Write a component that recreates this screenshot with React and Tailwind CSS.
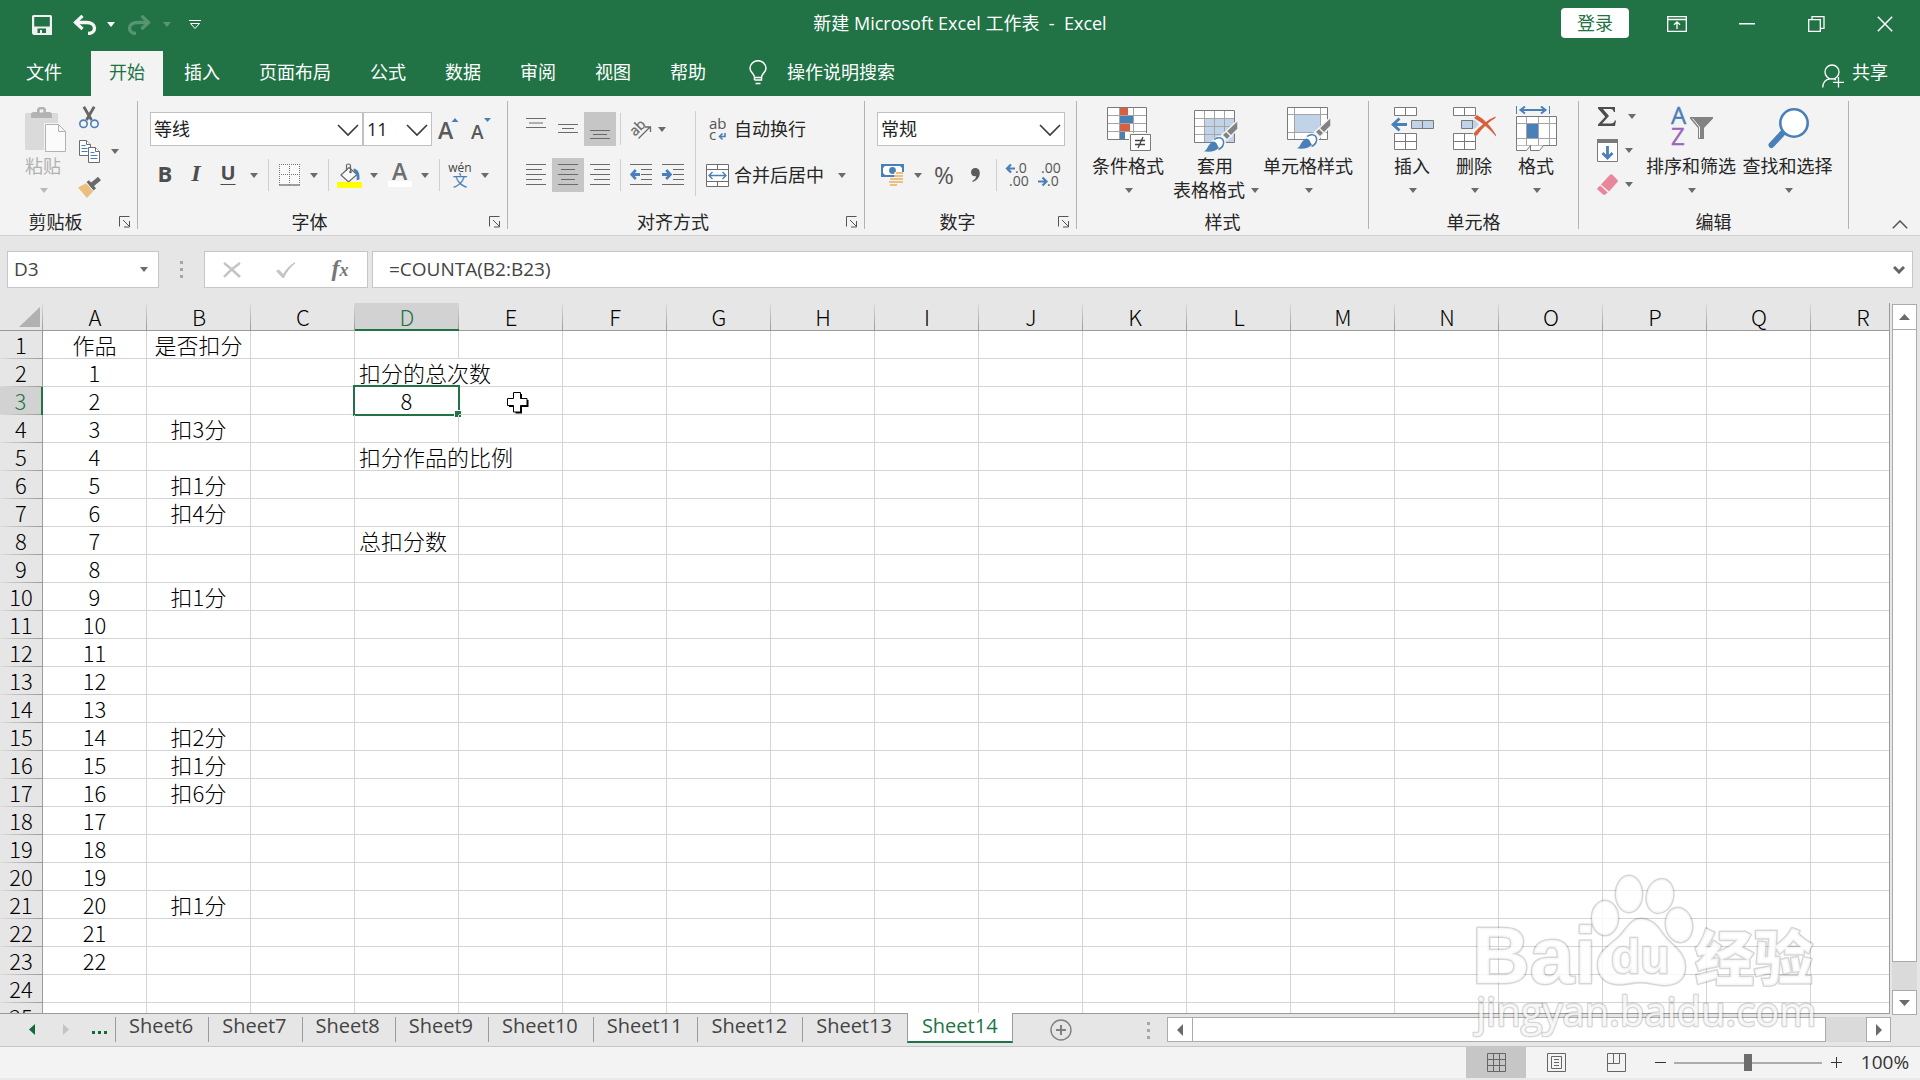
import React from "react";

const BLUE = "#4a80b8";
const GRAY = "#6d6d6d";

/* ---------- small building blocks ---------- */

function Caret({ className = "fill-[#6b6b6b]" }) {
  return (
    <svg width="8" height="5" viewBox="0 0 8 5" className={className} aria-hidden="true">
      <path d="M0 0h8L4 5z" />
    </svg>
  );
}

function Drop({ label, className = "w-5" }) {
  return (
    <button type="button" aria-label={label} className={`flex h-full shrink-0 items-center justify-center ${className}`}>
      <Caret />
    </button>
  );
}

function Tool({ label, className = "w-8", active = false, children }) {
  return (
    <button
      type="button"
      aria-label={label}
      className={`flex h-full shrink-0 items-center justify-center ${active ? "bg-[#c6c6c6]" : ""} ${className}`}
    >
      {children}
    </button>
  );
}

function Sep({ className = "w-2" }) {
  return (
    <span className={`flex h-full shrink-0 items-center justify-center ${className}`}>
      <span className="h-8 w-px bg-[#cfcfcf]" />
    </span>
  );
}

function Picker({ label, value, options, className }) {
  return (
    <label className={`relative block h-[34px] ${className}`}>
      <select
        aria-label={label}
        defaultValue={value}
        className="h-full w-full appearance-none border border-[#c1c1c1] bg-white pl-[3px] text-[18px] text-[#222]"
      >
        {options.map((o) => (
          <option key={o}>{o}</option>
        ))}
      </select>
      <svg width="22" height="13" viewBox="0 0 22 13" className="pointer-events-none absolute top-2.5 right-1 mt-0.5" aria-hidden="true">
        <path d="M1 1l10 10L21 1" fill="none" stroke="#3a3a3a" strokeWidth="1.6" />
      </svg>
    </label>
  );
}

function Group({ title, className = "", launcher = false, children }) {
  return (
    <section className={`flex shrink-0 flex-col border-r border-[#b4b4b4] ${className}`}>
      <div className="flex flex-1">{children}</div>
      <div className="flex h-3.5 items-center">
        <h2 className="flex-1 text-center leading-[14px]">{title}</h2>
        {launcher && (
          <button type="button" aria-label={`${title} 选项`} className="flex w-[26px] items-center pl-2">
            <svg width="12" height="12" viewBox="0 0 12 12" fill="none" stroke="#555" aria-hidden="true">
              <path d="M.5 10.500V.5h10M4 4l6 6M10.500 5v6H5" />
            </svg>
          </button>
        )}
      </div>
    </section>
  );
}

function Big({ icon, line1, line2, className }) {
  return (
    <button type="button" className={`flex shrink-0 flex-col items-center whitespace-nowrap ${className}`}>
      <span className="flex h-[54px] items-start pt-[5px] pl-0.5">{icon}</span>
      <span className="h-[23px] leading-[23px]">{line1}</span>
      <span className="flex h-6 items-center gap-1.5 pl-0.5 leading-6">
        {line2 && <span>{line2}</span>}
        <Caret />
      </span>
    </button>
  );
}

/* ---------- icons ---------- */

const SaveIcon = () => (
  <svg width="20" height="20" viewBox="0 0 20 20" aria-hidden="true">
    <path fill="#f0f0f0" fillRule="evenodd" d="M0 1.500Q0 0 1.500 0H18.500Q20 0 20 1.500V20H1.500L0 18.500zM2.200 2v9.500h15.600V2zM5.500 13.500V18H8v-3h2v3h4v-4.500z" />
  </svg>
);

const UndoIcon = ({ flip = false }) => (
  <svg width="24" height="20" viewBox="0 0 24 20" className={flip ? "-scale-x-100 opacity-25" : ""} fill="none" stroke="#f5f5f5" aria-hidden="true">
    <path strokeWidth="3.400" d="M2 7.500h11.500c5 0 8 2.500 8 5.800 0 3-2.500 5.200-6.500 5.200" />
    <path strokeWidth="3.200" d="M9.500 .8L2.500 7.500l7 6.500" />
  </svg>
);

const PasteIcon = () => (
  <svg width="42" height="46" viewBox="0 0 42 46" aria-hidden="true">
    <rect x="0" y="6" width="33" height="37" rx="1.500" fill="#dadada" />
    <path fill="#b3b3b3" fillRule="evenodd" d="M6 11V6.500L8 5h4V2l2-2h5l2 2v3h4l2 1.500V11zM14.700 2.500v3h3.600v-3z" />
    <path fill="#f6f6f6" stroke="#f3f3f3" strokeWidth="3" d="M20.500 17.500h13l7 7v20h-20z" />
    <path fill="#fbfbfb" stroke="#b3b3b3" d="M20.500 17.500h13l7 7v20h-20zM33.500 17.500v7h7" />
  </svg>
);

const CutIcon = () => (
  <svg width="20" height="23" viewBox="0 0 20 23" fill="none" aria-hidden="true">
    <path stroke="#666" strokeWidth="2.800" d="M4.800 .8L12.500 14M15.200 .8L7.500 14" />
    <circle cx="4.500" cy="17.800" r="3.700" stroke={BLUE} strokeWidth="1.600" />
    <circle cx="15.500" cy="17.800" r="3.700" stroke={BLUE} strokeWidth="1.600" />
  </svg>
);

const CopyIcon = () => (
  <svg width="21" height="23" viewBox="0 0 21 23" fill="#fff" stroke={GRAY} aria-hidden="true">
    <path d="M.5 .5h7l4 4v11H.5z" />
    <path d="M7.500 .5v4h4" />
    <path stroke={BLUE} d="M2.500 5.500h4M2.500 8.500h6M2.500 11.500h6" />
    <path d="M9.500 7.500h7l4 4v11h-11z" />
    <path d="M16.500 7.500v4h4" />
    <path stroke={BLUE} d="M11.500 12.500h4M11.500 15.500h7M11.500 18.500h7" />
  </svg>
);

const BrushIcon = () => (
  <svg width="23" height="21" viewBox="0 0 23 21" aria-hidden="true">
    <path fill="#eabf7f" d="M0 10.500l8.500-4.500 7 8-6.500 7z" />
    <path fill="#6a6a6a" d="M8.500 5l2.500-1.800 7 8-2.500 2.500z" />
    <path stroke="#6a6a6a" strokeWidth="4.500" d="M14 7.800l7.500-6.300" />
    <path stroke="#f3f3f3" strokeWidth="1" d="M8.300 6l7.200 8" />
  </svg>
);

const BordersIcon = () => (
  <svg width="21" height="22" viewBox="0 0 21 22" fill="none" stroke="#777" aria-hidden="true">
    <rect width="21" height="21" fill="#fafafa" stroke="none" />
    <path strokeDasharray="1 1" d="M0 .5h21M0 10.500h21M.5 0v21M10.500 0v21M20.500 0v21" />
    <path strokeWidth="1.400" d="M0 21h21" />
  </svg>
);

const BucketIcon = () => (
  <svg width="25" height="25" viewBox="0 0 25 25" aria-hidden="true">
    <path fill="#fafafa" stroke="#666" strokeWidth="1.200" d="M12 4.500l8 7-8.500 7.500-7.500-7z" />
    <path fill="none" stroke="#666" strokeWidth="1.200" d="M9.500 8V2.500Q9.500 1 11.500 1t2 1.500V9" />
    <circle cx="13.500" cy="9" r="1.300" fill="#666" />
    <path fill={BLUE} d="M16.500 5.500c4 .5 6.500 3.500 6 11l-3 .8c.5-4 .3-6-2.500-9z" />
    <path fill="#ffff00" d="M0 19h25v6H0z" />
  </svg>
);

function Lines({ rows, w = 20, h }) {
  return (
    <svg width={w} height={h} viewBox={`0 0 ${w} ${h}`} stroke="#6a6a6a" aria-hidden="true">
      {rows.map(([x1, x2, y]) => (
        <path key={y} d={`M${x1} ${y}H${x2}`} />
      ))}
    </svg>
  );
}

const OrientationIcon = () => (
  <svg width="22" height="20" viewBox="0 0 22 20" className="overflow-visible" aria-hidden="true">
    <text x="3" y="17" fontFamily="Open Sans" fontSize="14" fill="#6a6a6a" stroke="#6a6a6a" strokeWidth=".3" transform="rotate(-45 5 15)">ab</text>
    <path d="M8.500 19.500L20 8M15 8h5.500v5" fill="none" stroke="#6a6a6a" strokeWidth="1.300" />
  </svg>
);

const WrapIcon = () => (
  <svg width="18" height="23" viewBox="0 0 18 23" className="overflow-visible" aria-hidden="true">
    <text x="0" y="11" fontFamily="Open Sans" fontSize="15" fill="#555">ab</text>
    <text x="0" y="22" fontFamily="Open Sans" fontSize="15" fill="#555">c</text>
    <path d="M16 15v3.500h-5M13.500 15.500l-3 3 3 3" fill="none" stroke={BLUE} strokeWidth="1.600" />
  </svg>
);

const IndentIcon = ({ right = false }) => (
  <svg width="22" height="22" viewBox="0 0 22 22" stroke="#6a6a6a" aria-hidden="true">
    <path d="M0 .5h22M11 5.500h11M11 10.500h11M11 15.500h11M0 20.500h22" />
    <g transform={right ? "translate(10 0) scale(-1 1)" : ""} fill="none" stroke={BLUE} strokeWidth="3">
      <path d="M1.500 10.500H10" />
      <path strokeWidth="2.600" d="M5.800 6l-4.300 4.500 4.300 4.500" />
    </g>
  </svg>
);

const MergeIcon = () => (
  <svg width="23" height="23" viewBox="0 0 23 23" fill="#fff" stroke={GRAY} aria-hidden="true">
    <path d="M.5 .5h22v22H.5zM.5 5.500h22M.5 17.500h22M11.500 .5v5M11.500 17.500v5" />
    <path fill="none" stroke={BLUE} strokeWidth="1.400" d="M3 11.500h17M6.500 8L3 11.500 6.500 15M16.500 8l3.500 3.500-3.500 3.500" />
  </svg>
);

const CurrencyIcon = () => (
  <svg width="24" height="24" viewBox="0 0 24 24" aria-hidden="true">
    <path fill={BLUE} d="M0 1h23v13H0z" />
    <path fill="#fff" d="M2 5l2-2h15l2 2v5l-2 2H4l-2-2z" />
    <circle cx="11.500" cy="7.500" r="3.400" fill={BLUE} />
    <path fill="#f3f3f3" d="M13.500 9h9.500v6h-9.500z" />
    <path stroke="#eabf7f" strokeWidth="2" d="M15 10h7M14 13h8M15 16h7M14.500 19h7.500M9 16h7M8 19h8M9 22h7" />
  </svg>
);

const DecimalIcon = ({ less = false }) => (
  <svg width="25" height="24" viewBox="0 0 25 24" className="overflow-visible" aria-hidden="true">
    <g fontFamily="Open Sans" fontSize="14" fill="#555">
      <text x={less ? 3 : 9} y="10">{less ? ".00" : ".0"}</text>
      <text x={less ? 9 : 3} y="23">{less ? ".0" : ".00"}</text>
    </g>
    {less ? (
      <path d="M0 18.500h8M4.500 14.500l4 4-4 4" fill="none" stroke={BLUE} strokeWidth="2.200" />
    ) : (
      <path d="M9 5.500H1.500M5 1.500l-4 4 4 4" fill="none" stroke={BLUE} strokeWidth="2.200" />
    )}
  </svg>
);

const CondIcon = () => (
  <svg width="44" height="45" viewBox="0 0 44 45" aria-hidden="true">
    <path fill="#fff" stroke="#7a7a7a" d="M.5 1.500h39v32H.5z" />
    <path stroke="#a5a5a5" d="M1 9.500h38M1 17.500h38M1 25.500h38M12.500 2v31M26.500 2v31" />
    <path fill="#d9603f" d="M13 2h8v7h-8zM13 18h10v7H13z" />
    <path fill={BLUE} d="M13 10h13v7H13zM13 26h5v7h-5z" />
    <path fill="#fff" stroke="#f3f3f3" strokeWidth="3" d="M23.500 28.500h20v16h-20z" />
    <path fill="#fff" stroke="#7a7a7a" d="M23.500 28.500h20v16h-20z" />
    <path stroke="#444" strokeWidth="1.300" d="M28 34.500h10M28 38.500h10M36 31l-5 11" />
  </svg>
);

const PaintBrush = ({ x, y }) => (
  <g transform={`translate(${x} ${y})`}>
    <path d="M34 0v9L23 20l-5-5z" fill="#828282" stroke="#f3f3f3" strokeWidth="1.500" />
    <path d="M17 15l5 5" stroke="#f3f3f3" strokeWidth="2" />
    <path d="M22 11l6 6" stroke="#f3f3f3" strokeWidth="1.500" />
    <circle cx="15" cy="23" r="7" fill="#f3f3f3" />
    <path d="M10 19.500c4-3 9-2 9.500 2 .5 3.500-2 6.500-5 8" fill="#fff" stroke={BLUE} strokeWidth="1.500" />
    <path d="M0 31.500c4-2 4-8 9-10 4 0 4 4 6 6-3 4-8 4.500-15 4z" fill={BLUE} />
  </g>
);

const TableStyleIcon = () => (
  <svg width="45" height="46" viewBox="0 0 45 46" aria-hidden="true">
    <path fill="#fff" stroke="#7a7a7a" d="M.5 4.500h40v32H.5z" />
    <path fill="#c1d3e8" d="M11 13h29v23H11z" />
    <path stroke="#a5a5a5" d="M1 12.500h39M1 20.500h39M1 28.500h39M10.500 5v31M20.500 5v31M30.500 5v31" />
    <PaintBrush x={10} y={14} />
  </svg>
);

const CellStyleIcon = () => (
  <svg width="45" height="46" viewBox="0 0 45 46" aria-hidden="true">
    <path fill="#fff" stroke="#7a7a7a" d="M.5 1.500h40v32H.5z" />
    <path fill="#c1d3e8" d="M8 9h25v17H8z" />
    <path stroke="#a5a5a5" fill="none" d="M1 8.500h39M1 26.500h39M7.500 2v31M33.500 2v31" />
    <PaintBrush x={10} y={11} />
  </svg>
);

const InsertIcon = () => (
  <svg width="44" height="45" viewBox="0 0 44 45" fill="#fff" stroke="#7a7a7a" aria-hidden="true">
    <path d="M3.500 1.500h22v8h-22zM14.500 1.500v8M3.500 27.500h22v16h-22zM3.500 35.500h22M14.500 27.500v16" />
    <path fill="#c1d3e8" d="M20.500 14.500h22v8h-22zM31.500 14.500v8" />
    <path fill="none" stroke={BLUE} strokeWidth="2.800" d="M2 18.500h14M8.500 12.500l-6.500 6 6.500 6" />
  </svg>
);

const DeleteIcon = () => (
  <svg width="44" height="45" viewBox="0 0 44 45" fill="#fff" stroke="#7a7a7a" aria-hidden="true">
    <path d="M.5 1.500h22v8H.5zM11.500 1.500v8M.5 27.500h22v16H.5zM.5 35.500h22M11.500 27.500v16" />
    <path fill="#c1d3e8" stroke="none" d="M8 14h14l4 4.500-4 4H8z" />
    <path fill="none" d="M20 14.500H8.500v8H20M19.500 14.500v8" />
    <path fill="none" stroke="#f3f3f3" strokeWidth="5" d="M23 11c6 4 12 9 18 18M42 11c-7 4-14 10-20 18" />
    <path fill="#d9603f" stroke="none" d="M21 12l3-3c7 4 14 11 19 20v1.500C36 22 29 17 21 12zM42.500 10.500V12C36 16 29 22 24 29.500h-3V27C27 20 34 14 42.500 10.500z" />
  </svg>
);

const FormatIcon = () => (
  <svg width="42" height="46" viewBox="0 0 42 46" fill="#fff" stroke="#7a7a7a" aria-hidden="true">
    <path fill="none" stroke={BLUE} d="M.5 0v8M33.500 0v8" />
    <path fill="none" stroke={BLUE} strokeWidth="2" d="M4.500 4h25M9 .5L4.500 4 9 7.500M25 .5L29.500 4 25 7.500" />
    <path d="M.5 10.500h40v29H.5z" />
    <path stroke="#a5a5a5" d="M1 17.500h39M1 32.500h39M10.500 11v28M22.500 11v28M33.500 11v28" />
    <path fill={BLUE} stroke="none" d="M11 18h11v14H11z" />
    <path d="M.5 39.500v5h10l4-5M14.500 39.500v5h9l4-5" />
  </svg>
);

const FillIcon = () => (
  <svg width="21" height="23" viewBox="0 0 21 23" aria-hidden="true">
    <path fill="#fff" stroke="#7a7a7a" d="M.5 .5h20v22H.5z" />
    <path fill="#7a7a7a" d="M0 0h21v4H0z" />
    <path fill="none" stroke={BLUE} strokeWidth="2.800" d="M10.500 7v12M5.500 14l5 5 5-5" />
  </svg>
);

const EraserIcon = () => (
  <svg width="21" height="21" viewBox="0 0 21 21" fill="#e8879a" aria-hidden="true">
    <path d="M4 10.500L13 .8Q14.500-.3 15.500 .8L20.500 6q.8 1 0 2L12 17.500z" />
    <path d="M3.200 11.500l7.500 7L8 20.800Q7 21.300 6 20.500L.5 15.500Q-.2 14.800 .5 14z" />
  </svg>
);

const SortIcon = () => (
  <svg width="43" height="44" viewBox="0 0 43 44" className="overflow-visible" aria-hidden="true">
    <text x="0" y="18" fontFamily="Open Sans" fontSize="24" fill={BLUE} stroke={BLUE} strokeWidth=".4">A</text>
    <text x="0" y="39" fontFamily="Open Sans" fontSize="24" fill="#9a66bd" stroke="#9a66bd" strokeWidth=".4">Z</text>
    <path fill="#828282" d="M19 11h23v1.500L33 22v11h-6V22l-8-9.500z" />
    <path fill="none" stroke="#f3f3f3" d="M21.500 12.500l7 8.500v11" />
  </svg>
);

const FindIcon = () => (
  <svg width="42" height="44" viewBox="0 0 42 44" aria-hidden="true">
    <path d="M3.500 39L17 24.500" stroke={BLUE} strokeWidth="6" strokeLinecap="round" />
    <circle cx="26" cy="17" r="13.700" fill="#fff" stroke={BLUE} strokeWidth="2.600" />
  </svg>
);

/* ---------- data ---------- */

const COLS = "ABCDEFGHIJKLMNOPQR".split("");
const DEDUCTIONS = { 4: "扣3分", 6: "扣1分", 7: "扣4分", 10: "扣1分", 15: "扣2分", 16: "扣1分", 17: "扣6分", 21: "扣1分" };
const NOTES = { 2: "扣分的总次数", 5: "扣分作品的比例", 8: "总扣分数" };
const SHEETS = ["Sheet6", "Sheet7", "Sheet8", "Sheet9", "Sheet10", "Sheet11", "Sheet12", "Sheet13", "Sheet14"];

function cellText(col, row) {
  if (row === 1) return { A: "作品", B: "是否扣分" }[col] || "";
  if (col === "A") return row <= 23 ? String(row - 1) : "";
  if (col === "B") return DEDUCTIONS[row] || "";
  if (col === "D") return row === 3 ? "8" : NOTES[row] || "";
  return "";
}

/* ---------- page sections ---------- */

function TitleBar() {
  return (
    <header className="grid h-[51px] grid-cols-[1fr_auto_1fr] items-center text-white">
      <div className="flex h-[49px] items-center self-start pl-[21px]">
        <Tool label="保存" className="w-[42px]"><SaveIcon /></Tool>
        <Tool label="撤消" className="w-11"><UndoIcon /></Tool>
        <button type="button" aria-label="撤消列表" className="w-2"><Caret className="fill-white" /></button>
        <Tool label="恢复" className="w-12"><UndoIcon flip /></Tool>
        <button type="button" aria-label="恢复列表" className="w-2"><Caret className="fill-white opacity-25" /></button>
        <Tool label="自定义快速访问工具栏" className="w-12">
          <svg width="12" height="10" viewBox="0 0 12 10" fill="none" stroke="#fff" aria-hidden="true">
            <path d="M0 .5h12M1.500 3.500h9L6 8.500z" />
          </svg>
        </Tool>
      </div>
      <h1 className="pb-1 whitespace-pre">新建 Microsoft Excel 工作表{"  -  "}Excel</h1>
      <div className="flex h-full items-start justify-end">
        <button type="button" className="mt-2 mr-[13px] h-[30px] w-17 rounded-sm bg-white leading-[30px] text-[#217346]">登录</button>
        <div className="flex h-[47px] items-center">
          <Tool label="功能区显示选项" className="w-[70px]">
            <svg width="20" height="16" viewBox="0 0 20 16" fill="none" stroke="#fff" aria-hidden="true">
              <path strokeWidth="1.300" d="M.7 .7h18.600v14.600H.7zM.7 3.500h18.600M10 13V6M7 8.700L10 5.800l3 2.900" />
            </svg>
          </Tool>
          <Tool label="最小化" className="w-[70px]">
            <svg width="16" height="2" viewBox="0 0 16 2" aria-hidden="true"><path fill="#fff" d="M0 0h16v1.500H0z" /></svg>
          </Tool>
          <Tool label="还原" className="w-[68px]">
            <svg width="17" height="16" viewBox="0 0 17 16" fill="none" stroke="#fff" strokeWidth="1.300" aria-hidden="true">
              <path d="M.7 3.700h11.600v11.600H.7zM4 3.500V.7h12v11.600h-3.500" />
            </svg>
          </Tool>
          <Tool label="关闭" className="w-[70px]">
            <svg width="16" height="16" viewBox="0 0 16 16" fill="none" stroke="#fff" strokeWidth="1.500" aria-hidden="true">
              <path d="M.8 .8l14.400 14.400M15.200 .8L.8 15.200" />
            </svg>
          </Tool>
        </div>
      </div>
    </header>
  );
}

function TabStrip() {
  const tabs = ["开始", "插入", "页面布局", "公式", "数据", "审阅", "视图", "帮助"];
  return (
    <nav className="flex h-[45px] items-stretch text-white">
      <button type="button" className="mr-[11px] ml-2 px-[18px] pb-0.5">文件</button>
      <div className="flex gap-[3px]">
        {tabs.map((t, i) => (
          <button key={t} type="button" className={`px-[18px] pb-0.5 ${i === 0 ? "bg-[#f3f3f3] text-[#217346]" : ""}`}>{t}</button>
        ))}
      </div>
      <button type="button" className="ml-[25px] flex items-center gap-5 pb-0.5">
        <svg width="18" height="25" viewBox="0 0 18 25" fill="none" stroke="#fff" strokeWidth="1.500" aria-hidden="true">
          <path d="M5.500 17.500C5.500 13.500 1 12.500 1 8.300A8 7.600 0 0 1 17 8.300C17 12.500 12.500 13.500 12.500 17.500zM5.500 20h7v-2.500M5.500 17.500V20M6.500 23.500h5" />
        </svg>
        操作说明搜索
      </button>
      <button type="button" className="mr-8 ml-auto flex items-center gap-2 pb-0.5">
        <svg width="22" height="24" viewBox="0 0 22 24" className="mt-1.5" fill="none" stroke="#fff" strokeWidth="1.300" aria-hidden="true">
          <circle cx="10" cy="8" r="7" />
          <path d="M.7 23.500c0-5 3-8.500 7.300-8.700M12 15l2 .800M16.500 13v10.500M11 18.300h11" />
        </svg>
        共享
      </button>
    </nav>
  );
}

function Ribbon() {
  return (
    <div className="flex h-[140px] border-b border-[#d2d2d2] bg-[#f3f3f3] pt-[5px] pb-[6px] text-[#262626]">
      <Group title="剪贴板" launcher className="w-[138px]">
        <button type="button" className="ml-[15px] flex w-14 flex-col items-center text-[#b1b1b1]">
          <span className="flex h-[54px] items-start pt-[6px] pl-1.5"><PasteIcon /></span>
          <span className="h-[23px] leading-[23px]">粘贴</span>
          <span className="flex h-6 items-center pl-0.5"><Caret className="fill-[#b9b9b9]" /></span>
        </button>
        <div className="flex flex-col gap-1 pt-px">
          <div className="flex h-[30px] items-center"><Tool label="剪切" className="w-[35px]"><CutIcon /></Tool></div>
          <div className="flex h-[30px] items-center">
            <Tool label="复制" className="w-9"><CopyIcon /></Tool>
            <Drop label="复制选项" className="w-4" />
          </div>
          <div className="flex h-[34px] items-center"><Tool label="格式刷" className="w-9"><BrushIcon /></Tool></div>
        </div>
      </Group>

      <Group title="字体" launcher className="w-[370px]">
        <div className="flex flex-col gap-3 pt-[11px] pl-3">
          <div className="flex h-[34px]">
            <Picker label="字体" value="等线" options={["等线", "宋体"]} className="w-[213px]" />
            <Picker label="字号" value="11" options={["11", "12"]} className="w-[69px]" />
            <Tool label="增大字号" className="w-[34px]">
              <svg width="22" height="22" viewBox="0 0 22 22" className="overflow-visible" aria-hidden="true">
                <text x="0" y="21" fontFamily="Open Sans" fontWeight="600" fontSize="23" fill="#595959">A</text>
                <path fill={BLUE} d="M13.500 4h7L17 0z" />
              </svg>
            </Tool>
            <Tool label="减小字号" className="w-[30px]">
              <svg width="22" height="22" viewBox="0 0 22 22" className="overflow-visible" aria-hidden="true">
                <text x="1" y="21" fontFamily="Open Sans" fontWeight="600" fontSize="19" fill="#595959">A</text>
                <path fill={BLUE} d="M14 0h7l-3.500 4z" />
              </svg>
            </Tool>
          </div>
          <div className="flex h-[34px]">
            <Tool label="加粗" className="w-[30px]"><b className="pb-1 text-[22px] leading-none text-[#4d4d4d]">B</b></Tool>
            <Tool label="倾斜"><i className="pb-1 font-['Liberation_Serif'] text-[24px] leading-none font-bold text-[#4d4d4d]">I</i></Tool>
            <Tool label="下划线"><span className="pb-1 text-[20px] leading-none font-bold text-[#4d4d4d] underline decoration-1 underline-offset-4">U</span></Tool>
            <Drop label="下划线选项" />
            <Sep />
            <Tool label="边框" className="w-[34px]"><BordersIcon /></Tool>
            <Drop label="边框选项" className="w-4" />
            <Sep className="w-3" />
            <Tool label="填充颜色" className="w-[30px]"><BucketIcon /></Tool>
            <Drop label="填充颜色选项" />
            <Tool label="字体颜色">
              <svg width="24" height="24" viewBox="0 0 24 24" className="overflow-visible" aria-hidden="true">
                <text x="4" y="17" fontFamily="Open Sans" fontWeight="600" fontSize="23" fill="#6d6d6d">A</text>
                <path fill="#fff" d="M0 18h24v6H0z" />
              </svg>
            </Tool>
            <Drop label="字体颜色选项" className="w-[18px]" />
            <Sep className="w-2.5" />
            <Tool label="拼音">
              <span className="flex flex-col items-center text-[#444]">
                <span className="text-[12px] leading-[10px]">wén</span>
                <span className="text-[15px] leading-[15px] text-[#4a80b8]">文</span>
              </span>
            </Tool>
            <Drop label="拼音选项" className="w-[18px]" />
          </div>
        </div>
      </Group>

      <Group title="对齐方式" launcher className="w-[357px]">
        <div className="flex w-[187px] flex-col gap-3 pt-[11px] pl-3">
          <div className="flex h-[34px]">
            <Tool label="顶端对齐"><span className="pb-3"><Lines h={10} rows={[[0, 20, 0.5], [3, 17, 5], [0, 20, 9.5]]} /></span></Tool>
            <Tool label="垂直居中"><Lines h={10} rows={[[0, 20, 0.5], [4, 16, 4.5], [0, 20, 8.5]]} /></Tool>
            <Tool label="底端对齐" active><span className="pt-3"><Lines h={10} rows={[[0, 20, 0.5], [3, 17, 4.5], [0, 20, 8.5]]} /></span></Tool>
            <Sep />
            <Tool label="方向" className="w-[34px]"><OrientationIcon /></Tool>
            <Drop label="方向选项" className="w-2" />
          </div>
          <div className="flex h-[34px]">
            <Tool label="左对齐"><Lines h={22} rows={[[0, 20, 0.5], [0, 16, 5.5], [0, 20, 10.5], [0, 16, 15.5], [0, 20, 20.5]]} /></Tool>
            <Tool label="居中" active><Lines h={22} rows={[[0, 20, 0.5], [3, 17, 5.5], [0, 20, 10.5], [3, 17, 15.5], [0, 20, 20.5]]} /></Tool>
            <Tool label="右对齐"><Lines h={22} rows={[[0, 20, 0.5], [4, 20, 5.5], [0, 20, 10.5], [4, 20, 15.5], [0, 20, 20.5]]} /></Tool>
            <Sep />
            <Tool label="减少缩进量" className="w-[34px]"><IndentIcon /></Tool>
            <Tool label="增加缩进量" className="w-[30px]"><IndentIcon right /></Tool>
          </div>
        </div>
        <span className="mt-2.5 h-[85px] w-px bg-[#cfcfcf]" />
        <div className="flex flex-col gap-3 pt-[11px] pl-2.5">
          <button type="button" className="flex h-[34px] items-center">
            <span className="flex w-[28px] pl-[3px]"><WrapIcon /></span>自动换行
          </button>
          <div className="flex h-[34px]">
            <button type="button" className="flex items-center">
              <span className="w-[28px]"><MergeIcon /></span>合并后居中
            </button>
            <Drop label="合并选项" className="w-9" />
          </div>
        </div>
      </Group>

      <Group title="数字" launcher className="w-[212px]">
        <div className="flex flex-col gap-3 pt-[11px] pl-3">
          <Picker label="数字格式" value="常规" options={["常规", "数字"]} className="w-[188px]" />
          <div className="flex h-[34px]">
            <Tool label="会计数字格式"><CurrencyIcon /></Tool>
            <Drop label="会计数字格式选项" className="w-[18px]" />
            <Tool label="百分比样式" className="w-[34px]"><span className="text-[24px] leading-none text-[#555]">%</span></Tool>
            <Tool label="千位分隔样式" className="w-7">
              <svg width="9" height="14" viewBox="0 0 9 14" fill="#5c5c5c" aria-hidden="true">
                <path d="M4.200 0C7 0 8.800 1.800 8.800 5c0 4-2.800 7.500-7 9l-.6-1c2.300-1.200 3.600-2.800 3.900-4.800C2 8.800 0 6.800 0 4.200 0 1.800 1.700 0 4.200 0z" />
              </svg>
            </Tool>
            <Sep className="w-3.5" />
            <Tool label="增加小数位数" className="w-[30px]"><DecimalIcon /></Tool>
            <Tool label="减少小数位数" className="w-[34px]"><DecimalIcon less /></Tool>
          </div>
        </div>
      </Group>

      <Group title="样式" className="w-[292px]">
        <Big icon={<CondIcon />} line1="条件格式" className="ml-2 w-[86px]" />
        <Big icon={<TableStyleIcon />} line1="套用" line2="表格格式" className="w-[88px]" />
        <Big icon={<CellStyleIcon />} line1="单元格样式" className="w-[98px]" />
      </Group>

      <Group title="单元格" className="w-[210px]">
        <Big icon={<InsertIcon />} line1="插入" className="ml-3 w-[62px]" />
        <Big icon={<DeleteIcon />} line1="删除" className="w-[62px]" />
        <Big icon={<FormatIcon />} line1="格式" className="w-[62px]" />
      </Group>

      <Group title="编辑" className="w-[270px]">
        <div className="ml-3.5 flex w-[50px] flex-col gap-1">
          <div className="flex h-[30px]">
            <Tool label="自动求和" className="w-7">
              <svg width="18" height="19" viewBox="0 0 18 19" fill="#4d4d4d" aria-hidden="true">
                <path d="M0 0h17v5h-1.200Q15.300 2 12.500 2H5l6 7-6.800 7.500H13q3 0 3.800-3H18L17 19H0v-1.500L7.200 9.800 0 1.500z" />
              </svg>
            </Tool>
            <Drop label="求和选项" className="w-[22px]" />
          </div>
          <div className="flex h-[30px]"><Tool label="填充" className="w-7"><FillIcon /></Tool><Drop label="填充选项" className="w-4" /></div>
          <div className="flex h-[30px]"><Tool label="清除" className="w-7"><EraserIcon /></Tool><Drop label="清除选项" className="w-4" /></div>
        </div>
        <Big icon={<SortIcon />} line1="排序和筛选" className="w-24" />
        <Big icon={<FindIcon />} line1="查找和选择" className="w-[97px]" />
      </Group>

      <div className="flex flex-1 items-end justify-end pr-3">
        <button type="button" aria-label="折叠功能区">
          <svg width="16" height="9" viewBox="0 0 16 9" fill="none" stroke="#555" strokeWidth="1.500" aria-hidden="true"><path d="M.8 8.300L8 1l7.200 7.300" /></svg>
        </button>
      </div>
    </div>
  );
}

function Dots() {
  return (
    <span className="flex flex-col gap-1">
      <span className="h-[3px] w-[3px] bg-[#a6a6a6]" />
      <span className="h-[3px] w-[3px] bg-[#a6a6a6]" />
      <span className="h-[3px] w-[3px] bg-[#a6a6a6]" />
    </span>
  );
}

function FormulaBar() {
  return (
    <div className="flex h-[67px] items-center pr-[7px] pl-[7px] text-[#444]">
      <div className="flex h-[37px] w-[152px] border border-[#c6c6c6] bg-white">
        <input aria-label="名称框" defaultValue="D3" className="w-0 flex-1 bg-transparent pl-1.5 text-[19px] outline-none" />
        <Drop label="名称列表" className="w-7" />
      </div>
      <span className="flex w-[45px] justify-center"><Dots /></span>
      <div className="flex h-[37px] w-[164px] items-center border border-[#c6c6c6] bg-white">
        <Tool label="取消" className="w-[54px]">
          <svg width="18" height="16" viewBox="0 0 18 16" fill="none" stroke="#c4c4c4" strokeWidth="2.500" aria-hidden="true"><path d="M1 1q8 6 16 14M17 1Q8 7 1 15" /></svg>
        </Tool>
        <Tool label="输入" className="w-[54px]">
          <svg width="20" height="16" viewBox="0 0 20 16" fill="#c4c4c4" aria-hidden="true"><path d="M0 9l3-1.500 4 4.500Q12 4 19 0v1.500Q12 7 8 16H6.500z" /></svg>
        </Tool>
        <Tool label="插入函数" className="w-[54px]">
          <span className="pb-1 font-['Liberation_Serif'] text-[24px] leading-none font-bold text-[#777] italic">f<span className="text-[18px]">x</span></span>
        </Tool>
      </div>
      <div className="ml-1 flex h-[37px] flex-1 items-center border border-[#c6c6c6] bg-white">
        <input aria-label="编辑栏" defaultValue="=COUNTA(B2:B23)" className="w-0 flex-1 bg-transparent pl-4 text-[19px] outline-none" />
        <button type="button" aria-label="展开编辑栏" className="w-[25px] pl-1.5">
          <svg width="12" height="8" viewBox="0 0 12 8" fill="none" stroke="#666" strokeWidth="3" aria-hidden="true"><path d="M1 1l5 5 5-5" /></svg>
        </button>
      </div>
    </div>
  );
}

function Sheet() {
  const rows = Array.from({ length: 25 }, (_, i) => i + 1);
  return (
    <div className="relative min-w-0 flex-1 overflow-hidden border-r border-[#9b9b9b] bg-white">
      <table className="w-[1915px] table-fixed border-separate border-spacing-0 font-['Noto_Sans_CJK_SC',sans-serif] text-[22px] leading-[27px] font-light text-black">
        <colgroup>
          <col className="w-[43px]" />
          {COLS.map((c) => <col key={c} className="w-[104px]" />)}
        </colgroup>
        <thead>
          <tr>
            <th className="relative h-7 border-b border-[#9b9b9b] bg-[#e6e6e6] p-0">
              <svg width="21" height="20" viewBox="0 0 21 20" className="absolute right-[3px] bottom-[3px]" aria-hidden="true"><path fill="#b1b1b1" d="M21 0v20H0z" /></svg>
              <span className="absolute inset-y-0 right-0 w-px bg-linear-to-b from-[#dcdcdc] to-[#9b9b9b]" />
            </th>
            {COLS.map((c) => (
              <th
                key={c}
                className={`relative h-7 p-0 font-light ${c === "D" ? "border-b-2 border-[#217346] bg-[#d2d2d2] leading-[26px] text-[#217346]" : "border-b border-[#9b9b9b] bg-[#e6e6e6]"}`}
              >
                {c}
                <span className="absolute inset-y-0 right-0 w-px bg-linear-to-b from-[#dcdcdc] to-[#9b9b9b]" />
              </th>
            ))}
          </tr>
        </thead>
        <tbody>
          {rows.map((r) => (
            <tr key={r}>
              <th className={`relative h-7 p-0 font-light ${r === 3 ? "border-r-2 border-[#217346] bg-[#d2d2d2] text-[#217346]" : "border-r border-[#9b9b9b] bg-[#e6e6e6]"}`}>
                <span className="block h-[27px]">{r}</span>
                <span className="block h-px bg-linear-to-r from-[#dcdcdc] to-[#9b9b9b]" />
              </th>
              {COLS.map((c) => {
                const text = cellText(c, r);
                const left = c === "D" && r !== 3;
                const spills = c === "D" && (r === 2 || r === 5);
                return (
                  <td
                    key={c}
                    className={`relative h-7 border-b border-b-[#d4d4d4] p-0 whitespace-nowrap ${spills ? "" : "border-r border-r-[#d4d4d4]"} ${left ? "pl-1 text-left" : "text-center"}`}
                  >
                    {text}
                    {c === "D" && r === 3 && (
                      <span className="absolute -top-0.5 -right-0.5 -bottom-0.5 -left-0.5 border-2 border-[#217346]">
                        <span className="absolute -right-[3px] -bottom-[3px] h-[7px] w-[7px] border-t border-l border-white bg-[#217346]" />
                      </span>
                    )}
                    {c === "E" && r === 3 && (
                      <svg width="22" height="22" viewBox="0 0 22 22" className="absolute top-[5px] left-12" aria-hidden="true">
                        <path fill="#000" d="M8.500 2H15v6h6.500v7H15v6.500H8.500V15H2V8h6.500z" />
                        <path fill="#fff" stroke="#000" d="M6.500 .5h7v6h6.500v7h-6.500v6.500h-7v-6.500H.5v-7h6z" />
                      </svg>
                    )}
                  </td>
                );
              })}
            </tr>
          ))}
        </tbody>
      </table>
    </div>
  );
}

function VScroll() {
  return (
    <div className="relative z-10 -mb-0.5 flex w-[30px] flex-col bg-[#e6e6e6] pt-px pr-[3px] pl-0.5">
      <button type="button" aria-label="向上滚动" className="flex h-[26px] items-center justify-center border border-[#ababab] bg-white">
        <svg width="11" height="6" viewBox="0 0 11 6" aria-hidden="true"><path fill="#6b6b6b" d="M0 6h11L5.500 0z" /></svg>
      </button>
      <div className="flex-1 border-x border-b border-[#ababab] bg-white" />
      <div className="h-7 bg-[#dadada]" />
      <button type="button" aria-label="向下滚动" className="flex h-[25px] items-center justify-center border border-[#ababab] bg-white">
        <svg width="11" height="6" viewBox="0 0 11 6" aria-hidden="true"><path fill="#6b6b6b" d="M0 0h11L5.500 6z" /></svg>
      </button>
    </div>
  );
}

function SheetTabs() {
  return (
    <div className="grid h-[34px] grid-cols-[1167fr_724fr_29px] border-b border-[#c6c6c6]">
      <div className="flex border-t border-[#9b9b9b]">
        <button type="button" aria-label="上一张" className="ml-4 flex w-8 items-center justify-center pb-0.5">
          <svg width="6" height="11" viewBox="0 0 6 11" aria-hidden="true"><path fill="#0e6b38" d="M6 0v11L0 5.500z" /></svg>
        </button>
        <button type="button" aria-label="下一张" className="flex w-9 items-center justify-center pb-0.5">
          <svg width="6" height="11" viewBox="0 0 6 11" aria-hidden="true"><path fill="#c3c3c3" d="M0 0v11l6-5.500z" /></svg>
        </button>
        <button type="button" aria-label="更多工作表" className="flex w-[31px] items-center justify-center gap-[3px] pt-1">
          <span className="h-[3px] w-[3px] bg-[#0e6b38]" />
          <span className="h-[3px] w-[3px] bg-[#0e6b38]" />
          <span className="h-[3px] w-[3px] bg-[#0e6b38]" />
        </button>
        <div className="flex pb-[3px]">
          {SHEETS.map((s) =>
            s === "Sheet14" ? (
              <button key={s} type="button" className="-mt-px border-x border-b-2 border-x-[#9b9b9b] border-b-[#217346] bg-white px-[14px] pb-0.5 text-[20px] leading-[22px] text-[#217346]">{s}</button>
            ) : (
              <button key={s} type="button" className="flex text-[20px] text-[#444]">
                <span className="mt-[3px] h-[25px] w-px bg-[#9b9b9b]" />
                <span className="pr-[15px] pl-[13px] leading-[24px]">{s}</span>
              </button>
            )
          )}
        </div>
        <button type="button" aria-label="新工作表" className="ml-[37px] flex items-center">
          <svg width="22" height="22" viewBox="0 0 22 22" fill="none" stroke="#808080" aria-hidden="true">
            <circle cx="11" cy="11" r="10" strokeWidth="1.400" />
            <path strokeWidth="2" d="M11 6v10M6 11h10" />
          </svg>
        </button>
        <span className="mr-[17px] ml-auto flex items-center"><Dots /></span>
      </div>
      <div className="flex border-t border-[#9b9b9b] pt-[3px] pb-1">
        <button type="button" aria-label="向左滚动" className="flex w-[26px] items-center justify-center border border-[#ababab] bg-white">
          <svg width="6" height="12" viewBox="0 0 6 12" aria-hidden="true"><path fill="#6b6b6b" d="M6 0v12L0 6z" /></svg>
        </button>
        <div className="flex-1 border-y border-r border-[#ababab] bg-white" />
        <div className="w-10 bg-[#dadada]" />
        <button type="button" aria-label="向右滚动" className="flex w-[25px] items-center justify-center border border-[#ababab] bg-white">
          <svg width="6" height="12" viewBox="0 0 6 12" aria-hidden="true"><path fill="#6b6b6b" d="M0 0v12l6-6z" /></svg>
        </button>
      </div>
      <div />
    </div>
  );
}

function StatusBar() {
  return (
    <footer className="flex h-[33px] items-stretch justify-end border-b-2 border-[#e9e9e9] bg-[#f3f3f3] text-[#333]">
      <button type="button" aria-label="普通" className="flex w-[60px] items-center justify-center bg-[#c6c6c6]">
        <svg width="19" height="19" viewBox="0 0 19 19" fill="none" stroke="#666" aria-hidden="true"><path d="M.5 .5h18v18H.5zM.5 6.500h18M.5 12.500h18M6.500 .5v18M12.500 .5v18" /></svg>
      </button>
      <button type="button" aria-label="页面布局" className="flex w-[60px] items-center justify-center">
        <svg width="19" height="19" viewBox="0 0 19 19" fill="none" stroke="#666" aria-hidden="true"><path d="M.5 .5h18v18H.5zM4.500 3.500h10v12h-10zM7 6.500h5M7 9.500h5M7 12.500h5" /></svg>
      </button>
      <button type="button" aria-label="分页预览" className="flex w-[60px] items-center justify-center">
        <svg width="19" height="19" viewBox="0 0 19 19" fill="none" stroke="#666" aria-hidden="true"><path d="M.5 .5h18v18H.5zM.5 10.500h12V.5M6.500 .5v10" /></svg>
      </button>
      <button type="button" aria-label="缩小" className="flex w-7 items-center justify-center"><span className="h-px w-[11px] bg-[#333]" /></button>
      <input
        type="range"
        aria-label="缩放"
        defaultValue="50"
        className="w-[148px] appearance-none bg-transparent [&::-webkit-slider-runnable-track]:h-0.5 [&::-webkit-slider-runnable-track]:bg-[#acacac] [&::-webkit-slider-thumb]:-mt-2 [&::-webkit-slider-thumb]:h-[17px] [&::-webkit-slider-thumb]:w-2 [&::-webkit-slider-thumb]:appearance-none [&::-webkit-slider-thumb]:bg-[#6d6d6d]"
      />
      <button type="button" aria-label="放大" className="flex w-7 items-center justify-center">
        <svg width="11" height="11" viewBox="0 0 11 11" stroke="#333" aria-hidden="true"><path d="M0 5.500h11M5.500 0v11" /></svg>
      </button>
      <button type="button" className="w-[70px] text-[19px] leading-[31px]">100%</button>
    </footer>
  );
}

function WatermarkShapes() {
  return (
    <>
      <text x="6" y="111" fontFamily="Liberation Sans" fontWeight="700" fontSize="80">Bai</text>
      <ellipse cx="139" cy="46" rx="13" ry="17" />
      <ellipse cx="163" cy="22" rx="13" ry="18" />
      <ellipse cx="194" cy="24" rx="13" ry="17" transform="rotate(14 194 24)" />
      <ellipse cx="213" cy="53" rx="13" ry="17" transform="rotate(-10 213 53)" />
      <path d="M175 47c12 0 18 10 24 18s20 15 20 30c0 13-9 18-21 18-8 0-14-3-23-3s-17 3-25 2c-11-1-18-8-18-19 0-13 11-19 20-27s12-19 23-19z" />
      <text x="145" y="101" fontFamily="Liberation Sans" fontWeight="700" fontSize="48">du</text>
      <text x="229" y="108" fontFamily="Noto Sans CJK SC" fontWeight="900" fontSize="59">经验</text>
      <text x="10" y="154" fontFamily="Open Sans" fontSize="40">jingyan.baidu.com</text>
    </>
  );
}

function Watermark() {
  return (
    <svg
      width="370"
      height="170"
      viewBox="0 0 370 170"
      className="pointer-events-none absolute right-[84px] bottom-[38px] z-20"
      fill="#fff"
      fillOpacity="0.8"
      stroke="#000"
      strokeOpacity="0.16"
      strokeWidth="3"
      strokeLinejoin="round"
      style={{ paintOrder: "stroke" }}
    >
      <WatermarkShapes />
    </svg>
  );
}

export default function App() {
  return (
    <div className="relative flex h-screen flex-col overflow-hidden bg-[#e6e6e6] font-['Open_Sans','Noto_Sans_CJK_SC',sans-serif] text-[18px]">
      <div className="bg-[#217346]">
        <TitleBar />
        <TabStrip />
      </div>
      <Ribbon />
      <FormulaBar />
      <main className="flex min-h-0 flex-1">
        <Sheet />
        <VScroll />
      </main>
      <SheetTabs />
      <StatusBar />
      <Watermark />
    </div>
  );
}
